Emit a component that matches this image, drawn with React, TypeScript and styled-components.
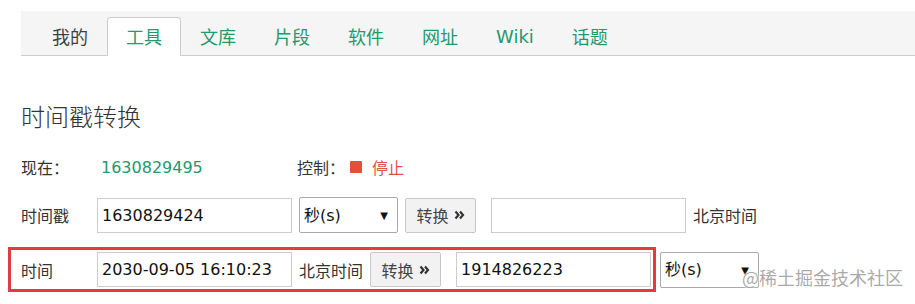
import React from 'react'
import styled, { createGlobalStyle } from 'styled-components'

const GlobalStyle = createGlobalStyle`
  body {
    margin: 0;
    background: #fff;
    font-family: "DejaVu Sans", "Noto Sans CJK SC", sans-serif;
    color: #333;
  }
`

const tabs = ['我的', '工具', '文库', '片段', '软件', '网址', 'Wiki', '话题']

const UnitSelect = () => (
  <SelectWrap>
    <Select defaultValue='s'>
      <option value='s'>秒(s)</option>
      <option value='ms'>毫秒(ms)</option>
    </Select>
    <Arrow>▼</Arrow>
  </SelectWrap>
)

const Convert = () => (
  <ConvertButton>
    转换
    <svg width='11' height='10' viewBox='0 0 11 10'>
      <path d='M1.5 1.5 L4.5 5 L1.5 8.5 M6 1.5 L9 5 L6 8.5' fill='none' stroke='#333' strokeWidth='2.2' />
    </svg>
  </ConvertButton>
)

export default function App() {
  return (
    <Page>
      <GlobalStyle />
      <TabBar>
        {tabs.map((t, i) => (
          <Tab key={t} active={i === 1} muted={i === 0}>
            {t}
          </Tab>
        ))}
      </TabBar>

      <Title>时间戳转换</Title>

      <StatusRow>
        <Label width={80}>现在：</Label>
        <Now>1630829495</Now>
        <Label>控制：</Label>
        <StopBox />
        <StopText>停止</StopText>
      </StatusRow>

      <FormRow>
        <Label width={69}>时间戳</Label>
        <Input defaultValue='1630829424' />
        <UnitSelect />
        <Convert />
        <Input defaultValue='' />
        <Label>北京时间</Label>
      </FormRow>

      <FormRow second>
        <Highlight>
          <Label width={69}>时间</Label>
          <Input defaultValue='2030-09-05 16:10:23' />
          <Label>北京时间</Label>
          <Convert />
          <Input defaultValue='1914826223' />
        </Highlight>
        <UnitSelect />
        <Watermark>@稀土掘金技术社区</Watermark>
      </FormRow>
    </Page>
  )
}

const Page = styled.div`
  position: relative;
  width: 915px;
  height: 304px;
  overflow: hidden;
  padding: 11px 0 0 21px;
  box-sizing: border-box;
`

const TabBar = styled.div`
  display: flex;
  align-items: flex-end;
  height: 45px;
  box-sizing: border-box;
  padding-left: 12px;
  background: #f5f5f5;
  border-bottom: 1px solid #ccc;
`

const Tab = styled.div<{ active?: boolean; muted?: boolean }>`
  height: 39px;
  box-sizing: border-box;
  margin-bottom: -1px;
  padding: 0 18px 2px;
  display: flex;
  align-items: center;
  font-size: 18px;
  color: ${(p) => (p.muted ? '#3a3f4b' : '#22996e')};
  background: ${(p) => (p.active ? '#fff' : 'transparent')};
  border: 1px solid ${(p) => (p.active ? '#ccc' : 'transparent')};
  border-bottom: none;
  border-radius: 4px 4px 0 0;
`

const Title = styled.h1`
  margin: 46px 0 0;
  font-size: 24px;
  line-height: 32px;
  font-weight: 300;
  color: #333;
`

const StatusRow = styled.div`
  display: flex;
  align-items: center;
  margin-top: 21px;
  height: 24px;
  font-size: 16px;
`

const Label = styled.span<{ width?: number }>`
  font-size: 16px;
  color: #333;
  white-space: nowrap;
  ${(p) => (p.width ? `width: ${p.width}px; flex-shrink: 0;` : '')}
`

const Now = styled.span`
  width: 196px;
  color: #22996e;
  font-size: 16px;
`

const StopBox = styled.span`
  width: 12px;
  height: 12px;
  margin-left: 5px;
  border-radius: 1px;
  background: #e74c3c;
`

const StopText = styled.span`
  margin-left: 10px;
  color: #e0524a;
  font-size: 16px;
`

const FormRow = styled.div<{ second?: boolean }>`
  position: relative;
  display: flex;
  align-items: center;
  gap: ${(p) => (p.second ? '4px' : '7px')};
  margin-top: ${(p) => (p.second ? '14px' : '18px')};
  margin-left: ${(p) => (p.second ? '-13px' : '0')};
`

const Highlight = styled.div`
  display: flex;
  align-items: center;
  gap: 7px;
  padding: 2px 2px 2px 10px;
  border: 3px solid #e53a40;
`

const Input = styled.input`
  width: 195px;
  height: 35px;
  box-sizing: border-box;
  padding: 0 4px;
  border: 1px solid #ccc;
  font-family: "DejaVu Sans", "Noto Sans CJK SC", sans-serif;
  font-size: 16px;
  color: #111;
  outline: none;
`

const SelectWrap = styled.div`
  position: relative;
  display: flex;
`

const Select = styled.select`
  width: 99px;
  height: 36px;
  box-sizing: border-box;
  padding: 0 0 0 4px;
  border: 1px solid #a9a9a9;
  border-radius: 2px;
  background: #fff;
  font-family: "DejaVu Sans", "Noto Sans CJK SC", sans-serif;
  font-size: 16px;
  color: #111;
  appearance: none;
  outline: none;
`

const Arrow = styled.span`
  position: absolute;
  right: 10px;
  top: 50%;
  transform: translateY(-50%);
  font-family: "DejaVu Sans", sans-serif;
  font-size: 10px;
  color: #111;
  pointer-events: none;
`

const ConvertButton = styled.button`
  height: 35px;
  width: 71px;
  box-sizing: border-box;
  margin-right: 8px;
  padding: 0;
  display: flex;
  align-items: center;
  justify-content: center;
  gap: 5px;
  background: #f2f2f2;
  border: 1px solid #c8c8c8;
  border-radius: 2px;
  font-family: "Noto Sans CJK SC", sans-serif;
  font-size: 16px;
  color: #444;
`

const Watermark = styled.span`
  position: absolute;
  right: 12px;
  bottom: 2px;
  font-family: "Noto Sans CJK SC", sans-serif;
  font-size: 18px;
  color: rgba(140, 140, 140, 0.75);
  text-shadow: 0 0 2px #fff, 0 0 2px #fff;
  pointer-events: none;
`
